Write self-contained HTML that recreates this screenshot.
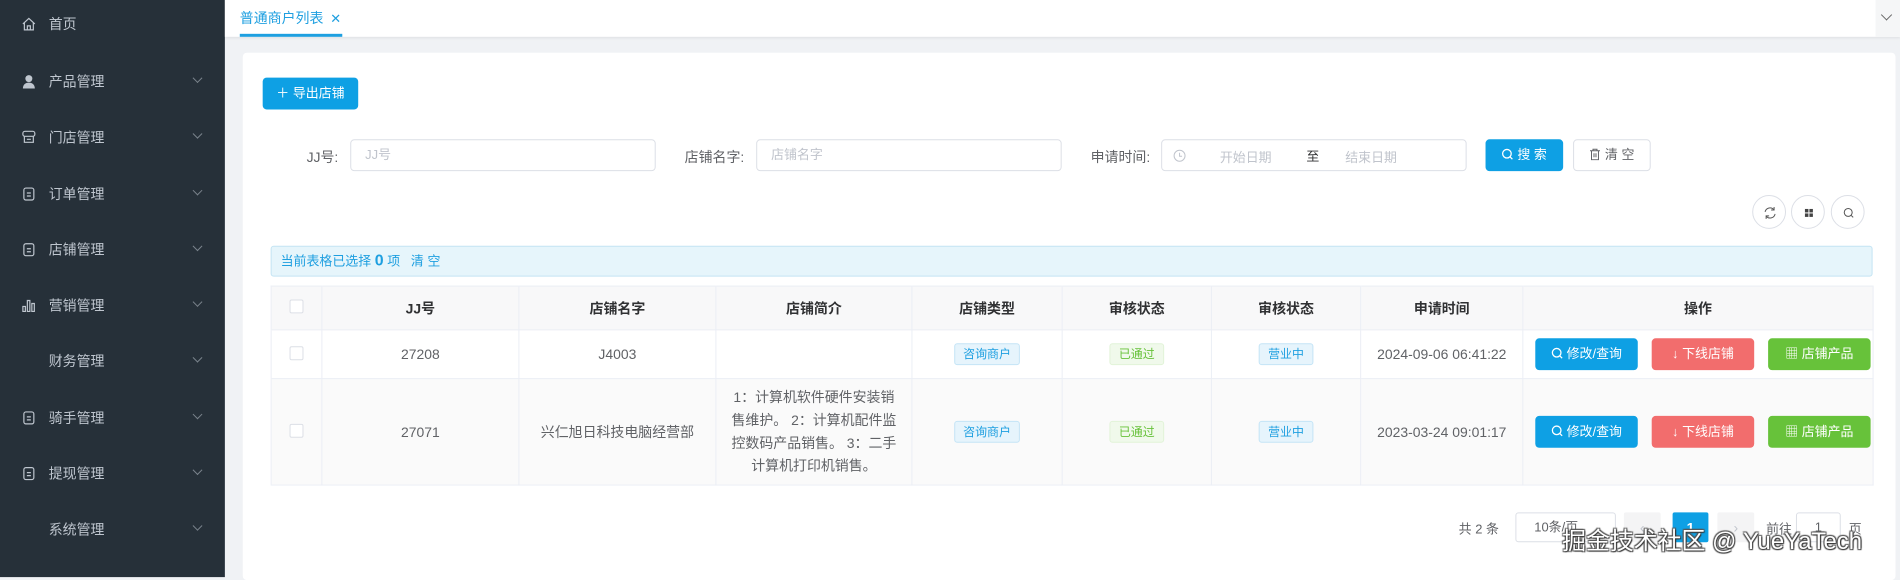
<!DOCTYPE html>
<html><head><meta charset="utf-8"><style>
*{margin:0;padding:0;box-sizing:border-box}
body{width:1900px;height:569px;overflow:hidden;background:#f0f2f5;font-family:"Liberation Sans","Noto Sans CJK SC",sans-serif;font-size:14px;color:#606266;position:relative}
#w{position:absolute;left:0;top:0;width:1910px;height:580px;transform:scale(0.995);transform-origin:0 0}
.a{position:absolute}
.side{left:0;top:0;width:226px;height:580px;background:#263039}
.mi{position:absolute;left:0;width:226px;height:20px;color:#bfc6cf;font-size:14px}
.mi .t{position:absolute;left:49px;top:0}
.mi .ic{position:absolute;left:21px;top:2px;width:16px;height:16px}
.mi .ch{position:absolute;left:195px;top:3px;width:7px;height:7px;border-right:1px solid #7a838c;border-bottom:1px solid #7a838c;transform:rotate(45deg)}
.inp{border:1px solid #dcdfe6;border-radius:4px;background:#fff;height:32px;color:#c0c4cc;font-size:13px;line-height:30px;padding-left:14px}
.lbl{font-size:14px;color:#606266;text-align:right}
.btn{border-radius:4px;color:#fff;font-size:13px;text-align:center;line-height:32px;height:32px}
td,th{border-right:1px solid #ebeef5;border-bottom:1px solid #ebeef5;text-align:center;vertical-align:middle}
th{background:#f8f8f9;color:#303133;font-weight:bold;font-size:14px;height:44px}
table{border-collapse:collapse;table-layout:fixed;border-left:1px solid #ebeef5;border-top:1px solid #ebeef5}
.cb{display:inline-block;width:14px;height:14px;border:1px solid #dcdfe6;border-radius:2px;background:#fff}
.tag{display:inline-block;height:22px;line-height:20px;padding:0 8px;font-size:12px;border-radius:3px;border:1px solid}
.tb{background:#e6f4fc;border-color:#c4e4f6;color:#1e9fe0}
.tg{background:#f0f9eb;border-color:#e1f3d8;color:#67c23a}
.ops{display:flex;justify-content:flex-start;gap:14px;padding-left:12px}
.ob{height:32px;width:103px;border-radius:4px;color:#fff;font-size:13px;line-height:32px;text-align:center}
.cir{position:absolute;top:196px;width:34px;height:34px;border:1px solid #dcdfe6;border-radius:50%;background:#fff}
.mg{display:inline-block;vertical-align:-1px}
</style></head><body><div id="w">
<div class="a side">
<div class="mi" style="top:14px"><svg class="ic" viewBox="0 0 16 16" fill="none" stroke="#bfc6cf" stroke-width="1.2"><path d="M2 8L8 2.5 14 8M3.5 7v7h9V7M6.5 14v-4h3v4"/></svg><span class="t">首页</span></div>
<div class="mi" style="top:72px"><svg class="ic" viewBox="0 0 16 16" fill="#bfc6cf"><circle cx="8" cy="5" r="3.5"/><path d="M2 15c0-4 2.5-6 6-6s6 2 6 6z"/></svg><span class="t">产品管理</span><i class="ch"></i></div>
<div class="mi" style="top:128px"><svg class="ic" viewBox="0 0 16 16" fill="none" stroke="#bfc6cf" stroke-width="1.2"><rect x="2" y="2" width="12" height="5" rx="2"/><path d="M3.5 7v6h9V7M6 10h4"/></svg><span class="t">门店管理</span><i class="ch"></i></div>
<div class="mi" style="top:185px"><svg class="ic" viewBox="0 0 16 16" fill="none" stroke="#bfc6cf" stroke-width="1.2"><rect x="3" y="2" width="10" height="12" rx="2"/><path d="M6 7h4M6 10h4"/></svg><span class="t">订单管理</span><i class="ch"></i></div>
<div class="mi" style="top:241px"><svg class="ic" viewBox="0 0 16 16" fill="none" stroke="#bfc6cf" stroke-width="1.2"><rect x="3" y="2" width="10" height="12" rx="2"/><path d="M6 7h4M6 10h4"/></svg><span class="t">店铺管理</span><i class="ch"></i></div>
<div class="mi" style="top:297px"><svg class="ic" viewBox="0 0 16 16" fill="none" stroke="#bfc6cf" stroke-width="1.2"><path d="M2 14V9h2.5v5zM6.5 14V3h2.5v11zM11 14V6h2.5v8z"/></svg><span class="t">营销管理</span><i class="ch"></i></div>
<div class="mi" style="top:353px"><span class="t">财务管理</span><i class="ch"></i></div>
<div class="mi" style="top:410px"><svg class="ic" viewBox="0 0 16 16" fill="none" stroke="#bfc6cf" stroke-width="1.2"><rect x="3" y="2" width="10" height="12" rx="2"/><path d="M6 7h4M6 10h4"/></svg><span class="t">骑手管理</span><i class="ch"></i></div>
<div class="mi" style="top:466px"><svg class="ic" viewBox="0 0 16 16" fill="none" stroke="#bfc6cf" stroke-width="1.2"><rect x="3" y="2" width="10" height="12" rx="2"/><path d="M6 7h4M6 10h4"/></svg><span class="t">提现管理</span><i class="ch"></i></div>
<div class="mi" style="top:522px"><span class="t">系统管理</span><i class="ch"></i></div>
</div>
<div class="a" style="left:226px;top:0;width:1684px;height:37px;background:#fff;box-shadow:0 1px 3px rgba(0,0,0,.08)"></div>
<div class="a" style="left:241px;top:8px;color:#1e9fe0;font-size:14px">普通商户列表 <span style="font-size:13px;margin-left:3px">✕</span></div>
<div class="a" style="left:241px;top:34px;width:103px;height:3px;background:#1e9fe0"></div>
<div class="a" style="left:1885px;top:0;width:25px;height:37px;background:#f5f6f7"></div>
<div class="a" style="left:1892px;top:11px;width:8px;height:8px;border-right:1px solid #666;border-bottom:1px solid #666;transform:rotate(45deg)"></div>
<div class="a" style="left:244px;top:53px;width:1661px;height:530px;background:#fff;border-radius:4px"></div>
<div class="a btn" style="left:264px;top:78px;width:96px;background:#0ea0e4">＋ 导出店铺</div>
<div class="a lbl" style="left:290px;top:148px;width:50px">JJ号:</div>
<div class="a inp" style="left:352px;top:140px;width:307px">JJ号</div>
<div class="a lbl" style="left:670px;top:148px;width:78px">店铺名字:</div>
<div class="a inp" style="left:760px;top:140px;width:307px">店铺名字</div>
<div class="a lbl" style="left:1080px;top:148px;width:76px">申请时间:</div>
<div class="a inp" style="left:1167px;top:140px;width:307px"></div>
<svg class="a" style="left:1179px;top:150px" width="13" height="13" viewBox="0 0 13 13" fill="none" stroke="#c0c4cc"><circle cx="6.5" cy="6.5" r="5.5"/><path d="M6.5 3.5v3.5h2.5"/></svg>
<div class="a" style="left:1226px;top:148px;color:#c0c4cc;font-size:13px">开始日期</div>
<div class="a" style="left:1313px;top:147px;color:#303133;font-size:13px">至</div>
<div class="a" style="left:1352px;top:148px;color:#c0c4cc;font-size:13px">结束日期</div>
<div class="a btn" style="left:1493px;top:140px;width:78px;background:#0ea0e4"><svg class="mg" width="12" height="12" viewBox="0 0 12 12" fill="none" stroke="#fff" stroke-width="1.3"><circle cx="5.5" cy="5.5" r="4.3"/><path d="M8.6 8.6l2.4 2.4"/></svg> 搜 索</div>
<div class="a btn" style="left:1581px;top:140px;width:78px;background:#fff;border:1px solid #dcdfe6;color:#606266;line-height:30px"><svg class="mg" width="12" height="12" viewBox="0 0 12 12" fill="none" stroke="#606266"><path d="M1 2.5h10M4 2.5V1h4v1.5M2.5 2.5v9h7v-9M5 5v4M7 5v4"/></svg> 清 空</div>
<div class="cir" style="left:1761px"><svg width="34" height="34" viewBox="0 0 34 34" fill="none" stroke="#555"><path d="M12 16a5 5 0 0 1 9-2M22 18a5 5 0 0 1-9 2M21 11v3h-3M13 23v-3h3"/></svg></div>
<div class="cir" style="left:1800px"><svg width="34" height="34" viewBox="0 0 34 34" fill="#444"><rect x="13" y="13" width="3.5" height="3.5"/><rect x="17.5" y="13" width="3.5" height="3.5"/><rect x="13" y="17.5" width="3.5" height="3.5"/><rect x="17.5" y="17.5" width="3.5" height="3.5"/></svg></div>
<div class="cir" style="left:1840px"><svg width="34" height="34" viewBox="0 0 34 34" fill="none" stroke="#555"><circle cx="16.5" cy="16.5" r="4"/><path d="M19.5 19.5l2 2"/></svg></div>
<div class="a" style="left:272px;top:247px;width:1610px;height:31px;background:#e6f5fb;border:1px solid #c4e4f3;border-radius:3px;color:#1e9fe0;font-size:13px;line-height:29px;padding-left:9px">当前表格已选择 <b style="font-size:16px">0</b> 项 &nbsp;&nbsp;清 空</div>
<table class="a" style="left:272px;top:287px;width:1610px">
<colgroup><col style="width:51px"><col style="width:198px"><col style="width:198px"><col style="width:197px"><col style="width:151px"><col style="width:150px"><col style="width:150px"><col style="width:163px"><col style="width:352px"></colgroup>
<tr><th><i class="cb"></i></th><th>JJ号</th><th>店铺名字</th><th>店铺简介</th><th>店铺类型</th><th>审核状态</th><th>审核状态</th><th>申请时间</th><th>操作</th></tr>
<tr style="height:49px"><td><i class="cb"></i></td><td>27208</td><td>J4003</td><td></td><td><span class="tag tb">咨询商户</span></td><td><span class="tag tg">已通过</span></td><td><span class="tag tb">营业中</span></td><td>2024-09-06 06:41:22</td><td><div class="ops"><div class="ob" style="background:#0ea0e4"><svg class="mg" width="12" height="12" viewBox="0 0 12 12" fill="none" stroke="#fff" stroke-width="1.3"><circle cx="5.5" cy="5.5" r="4.3"/><path d="M8.6 8.6l2.4 2.4"/></svg> 修改/查询</div><div class="ob" style="background:#f26d6d">↓ 下线店铺</div><div class="ob" style="background:#67c23a">▦ 店铺产品</div></div></td></tr>
<tr style="height:107px;background:#fafafa"><td><i class="cb"></i></td><td>27071</td><td>兴仁旭日科技电脑经营部</td><td style="line-height:23px;padding:0 12px">1：计算机软件硬件安装销售维护。 2：计算机配件监控数码产品销售。 3：二手计算机打印机销售。</td><td><span class="tag tb">咨询商户</span></td><td><span class="tag tg">已通过</span></td><td><span class="tag tb">营业中</span></td><td>2023-03-24 09:01:17</td><td><div class="ops"><div class="ob" style="background:#0ea0e4"><svg class="mg" width="12" height="12" viewBox="0 0 12 12" fill="none" stroke="#fff" stroke-width="1.3"><circle cx="5.5" cy="5.5" r="4.3"/><path d="M8.6 8.6l2.4 2.4"/></svg> 修改/查询</div><div class="ob" style="background:#f26d6d">↓ 下线店铺</div><div class="ob" style="background:#67c23a">▦ 店铺产品</div></div></td></tr>
</table>
<div class="a" style="left:1466px;top:521px;font-size:13px">共 2 条</div>
<div class="a" style="left:1523px;top:515px;width:101px;height:30px;border:1px solid #dcdfe6;border-radius:3px;font-size:13px;line-height:28px;padding-left:18px">10条/页</div>
<div class="a" style="left:1632px;top:515px;width:37px;height:30px;background:#f4f4f5;border-radius:2px;color:#c0c4cc;text-align:center;line-height:30px">‹</div>
<div class="a" style="left:1681px;top:515px;width:36px;height:30px;background:#0ea0e4;border-radius:2px;color:#fff;text-align:center;line-height:30px;font-weight:bold">1</div>
<div class="a" style="left:1726px;top:515px;width:37px;height:30px;background:#f4f4f5;border-radius:2px;color:#c0c4cc;text-align:center;line-height:30px">›</div>
<div class="a" style="left:1775px;top:521px;font-size:13px">前往</div>
<div class="a" style="left:1805px;top:515px;width:45px;height:30px;border:1px solid #dcdfe6;border-radius:3px;text-align:center;line-height:28px;font-size:13px">1</div>
<div class="a" style="left:1858px;top:521px;font-size:13px">页</div>
<div class="a" style="left:1570px;top:524px;font-size:24px;color:#fff;text-shadow:1px 1px 1px #333,-1px -1px 1px #555,1px -1px 1px #555,-1px 1px 1px #555;white-space:nowrap">掘金技术社区 @ YueYaTech</div>
</div></body></html>
